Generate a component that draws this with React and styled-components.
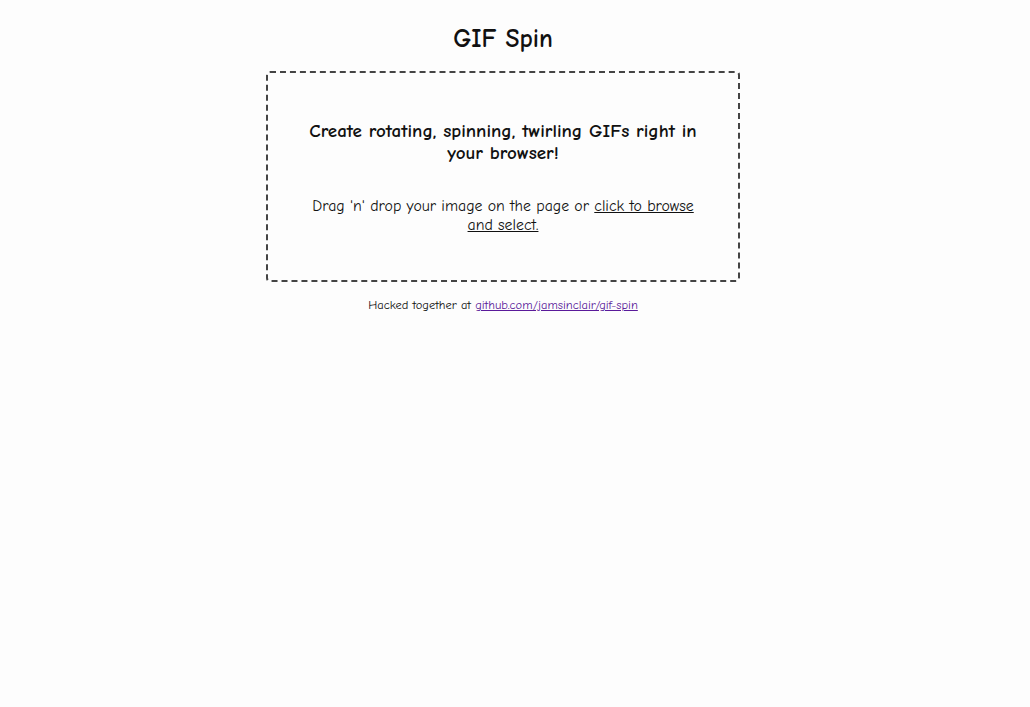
import React from "react";
import styled, { createGlobalStyle } from "styled-components";

const GlobalStyle = createGlobalStyle`
  html, body {
    margin: 0;
    padding: 0;
    background: #fdfdfd;
  }
  body {
    font-family: "Comic Neue", "Lato", "Noto Sans", sans-serif;
    color: #111;
  }
`;

const Page = styled.div`
  width: 1006px;
  display: flex;
  flex-direction: column;
  align-items: center;
  padding-top: 23px;
`;

const Title = styled.h1`
  margin: 0 0 16px;
  font-size: 25.5px;
  line-height: 32px;
  font-weight: 700;
`;

const DropZone = styled.div`
  box-sizing: border-box;
  width: 474px;
  height: 211px;
  border: 2px dashed #444;
  border-radius: 4px;
  padding: 47px 40px 0;
  text-align: center;
`;

const Lead = styled.h2`
  margin: 0 0 33px;
  font-size: 19px;
  line-height: 22px;
  font-weight: 700;
`;

const Hint = styled.p`
  margin: 0;
  font-size: 15.8px;
  line-height: 19px;
`;

const BrowseLink = styled.a`
  color: #111;
  text-decoration: underline;
  cursor: pointer;
`;

const Footer = styled.p`
  margin: 15px 0 0;
  font-size: 12.5px;
  line-height: 16px;
  color: #111;
`;

const RepoLink = styled.a`
  color: #5a1a9a;
  text-decoration: underline;
`;

function App() {
  return (
    <>
      <GlobalStyle />
      <Page>
        <Title>GIF Spin</Title>
        <DropZone>
          <Lead>Create rotating, spinning, twirling GIFs right in your browser!</Lead>
          <Hint>
            Drag 'n' drop your image on the page or{" "}
            <BrowseLink>click to browse and select.</BrowseLink>
          </Hint>
        </DropZone>
        <Footer>
          Hacked together at{" "}
          <RepoLink href="#">github.com/jamsinclair/gif-spin</RepoLink>
        </Footer>
      </Page>
    </>
  );
}

export default App;
